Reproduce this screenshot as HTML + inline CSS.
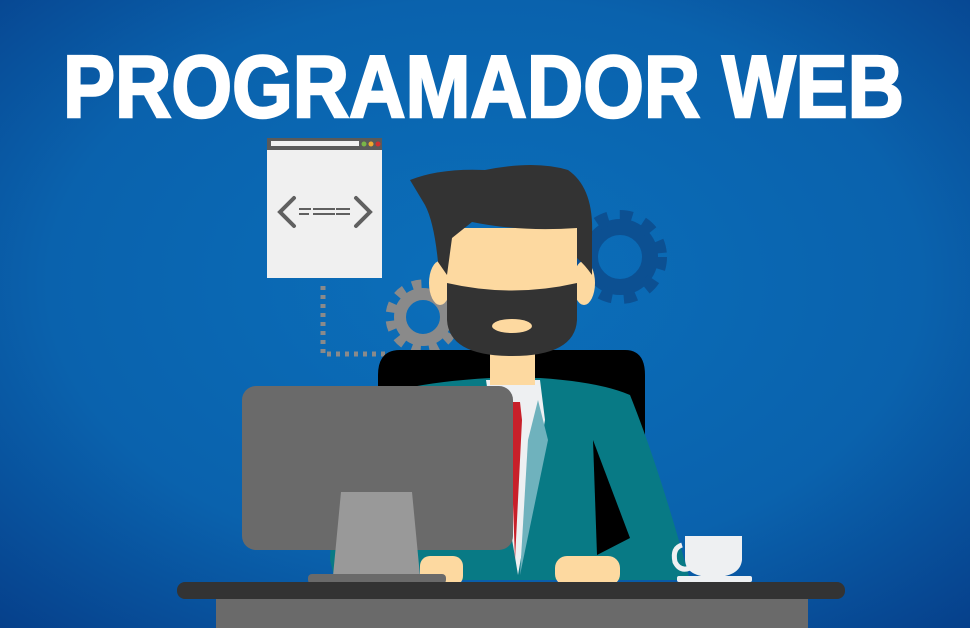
<!DOCTYPE html>
<html><head><meta charset="utf-8"><style>
html,body{margin:0;padding:0;width:970px;height:628px;overflow:hidden;background:#0a5aa6}
svg{display:block}
</style></head><body>
<svg width="970" height="628" viewBox="0 0 970 628" xmlns="http://www.w3.org/2000/svg">
<defs>
<radialGradient id="bg" cx="0.5" cy="0.45" r="0.75">
<stop offset="0" stop-color="#0b6fba"/>
<stop offset="0.6" stop-color="#0a62ad"/>
<stop offset="1" stop-color="#063f8a"/>
</radialGradient>
</defs>
<rect width="970" height="628" fill="url(#bg)"/>
<text x="63" y="117" fill="#fff" stroke="#fff" stroke-width="2.5" font-family="Liberation Sans, sans-serif" font-weight="bold" font-size="88" textLength="841" lengthAdjust="spacingAndGlyphs">PROGRAMADOR WEB</text>

<!-- browser window -->
<rect x="267" y="138" width="115" height="140" fill="#f0f0f0"/>
<rect x="267" y="138" width="115" height="12" fill="#5a5a5a"/>
<rect x="271" y="141" width="88" height="5" fill="#f0f0f0"/>
<circle cx="364" cy="144" r="2.5" fill="#7ab648"/>
<circle cx="371" cy="144" r="2.5" fill="#f0a830"/>
<circle cx="378" cy="144" r="2.5" fill="#d03030"/>
<path d="M294 198 L280 212 L294 226 M356 198 L370 212 L356 226" stroke="#606060" stroke-width="4" fill="none" stroke-linecap="round"/>
<path d="M299 209h12M313 209h22M336 209h14M299 214h10M313 214h22M336 214h14" stroke="#606060" stroke-width="2"/>
<!-- dotted line -->
<path d="M323 286 V354 H400" stroke="#8a8a8a" stroke-width="5" stroke-dasharray="4 5" fill="none"/>

<!-- gears -->
<g transform="translate(620,257)" fill="none" stroke="#0c5092">
<circle r="30" stroke-width="16"/>
<g stroke-width="14" stroke-dasharray="12 11.5"><circle r="40"/></g>
</g>
<g transform="translate(423,317)" fill="none" stroke="#8a8a8a">
<circle r="23" stroke-width="12"/>
<g stroke-width="11" stroke-dasharray="9 8.5"><circle r="32"/></g>
</g>

<!-- chair -->
<path d="M400 350 H625 Q645 350 645 375 V555 H593 V460 H400 Q378 460 378 440 V375 Q378 350 400 350Z" fill="#000"/>

<!-- suit -->
<path d="M330 560 Q335 430 380 395 Q420 382 490 378 L540 378 Q600 382 630 395 Q660 470 690 580 H335Z" fill="#087a85"/>
<path d="M593 440 L597 555 L630 538Z" fill="#000"/>
<!-- shirt/tie -->
<path d="M486 380 L540 380 L545 420 L518 575 L492 420Z" fill="#eef0f2"/>
<path d="M538 400 L548 440 L520 575 L528 440Z" fill="#6fb2bd"/>
<path d="M508 402 H520 L522 420 L515 560 L510 420Z" fill="#c8202a"/>
<!-- neck -->
<rect x="490" y="340" width="45" height="45" fill="#fdd9a0"/>

<!-- ears -->
<ellipse cx="440" cy="283" rx="11" ry="22" fill="#fdd9a0"/>
<ellipse cx="584" cy="283" rx="11" ry="22" fill="#fdd9a0"/>
<!-- face -->
<path d="M447 228 H577 V300 Q577 347 512 347 Q447 347 447 300Z" fill="#fdd9a0"/>
<!-- beard -->
<path d="M447 283 Q512 298 577 283 V320 Q575 356 512 356 Q449 356 447 320Z" fill="#333"/>
<ellipse cx="512" cy="326" rx="20" ry="7" fill="#fdd9a0"/>
<!-- hair -->
<path d="M410 180 Q440 168 485 170 Q535 160 568 170 Q594 188 592 235 V275 Q585 265 577 258 L577 228 Q520 232 472 222 L452 238 L447 275 L438 262 Q434 222 425 205 Z" fill="#333"/>

<!-- hands -->
<rect x="420" y="556" width="43" height="30" rx="10" fill="#fdd9a0"/>
<rect x="555" y="556" width="65" height="30" rx="12" fill="#fdd9a0"/>

<!-- monitor -->
<rect x="242" y="386" width="271" height="164" rx="14" fill="#6a6a6a"/>
<path d="M341 492 H412 L420 576 H333Z" fill="#999"/>
<rect x="308" y="574" width="138" height="10" rx="4" fill="#6a6a6a"/>

<!-- cup -->
<path d="M682 545 Q672 548 675 562 Q680 572 690 568" stroke="#eef0f2" stroke-width="5" fill="none"/>
<path d="M685 536 H742 V560 Q740 577 713 577 Q686 577 685 560Z" fill="#eef0f2"/>
<rect x="677" y="576" width="75" height="6" rx="2" fill="#eef0f2"/>

<!-- desk -->
<rect x="216" y="596" width="592" height="32" fill="#6a6a6a"/>
<rect x="177" y="582" width="668" height="17" rx="8" fill="#333"/>
</svg>
</body></html>
